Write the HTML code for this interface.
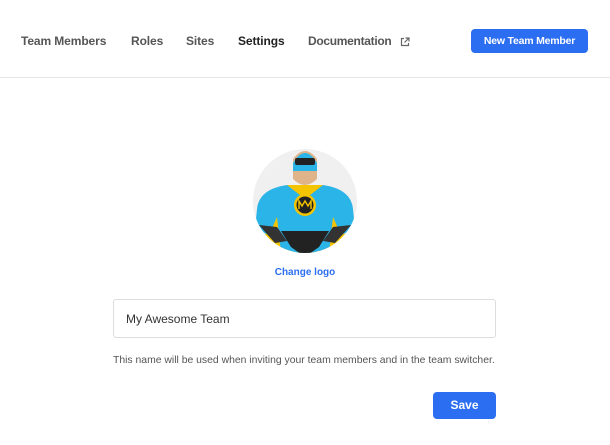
<!DOCTYPE html>
<html><head><style>
body{margin:0;width:610px;height:445px;background:#fff;font-family:"Liberation Sans",sans-serif;position:relative;overflow:hidden}
.nav{position:absolute;top:34px;font-size:12px;font-weight:bold;color:#555;letter-spacing:-0.1px}
.btn{position:absolute;background:#2b6ef2;color:#fff;font-weight:bold;border-radius:4px;text-align:center}
</style></head><body>
<div class="nav" style="left:21px">Team Members</div>
<div class="nav" style="left:131px">Roles</div>
<div class="nav" style="left:186px">Sites</div>
<div class="nav" style="left:238px;color:#222">Settings</div>
<div class="nav" style="left:308px;letter-spacing:-0.3px">Documentation</div>
<svg style="position:absolute;left:400px;top:37px" width="10" height="10" viewBox="0 0 10 10" fill="none" stroke="#666" stroke-width="1.2"><path d="M4 1.5H1.5v7h7V6M5.5 1h3.5v3.5M9 1L4.5 5.5"/></svg>
<div class="btn" style="left:471px;top:29px;width:117px;height:24px;line-height:24px;font-size:10.5px;letter-spacing:-0.2px">New Team Member</div>
<div style="position:absolute;left:0;top:77px;width:610px;height:1px;background:#e6e6e6"></div>
<svg style="position:absolute;left:253px;top:149px" width="104" height="104" viewBox="0 0 104 104">
<defs><clipPath id="c"><circle cx="52" cy="52" r="52"/></clipPath></defs>
<circle cx="52" cy="52" r="52" fill="#f0f0f0"/>
<g clip-path="url(#c)">
<path d="M22 40 L82 40 L96 104 L8 104Z" fill="#f5c400"/>
<path d="M4 60 Q6 40 34 36 L70 36 Q98 40 100 60 L102 80 L88 86 L80 68 L76 104 L28 104 L24 68 L16 86 L2 80Z" fill="#2bb4e8"/>
<path d="M34 36 L52 50 L70 36" fill="#f5c400"/>
<path d="M28 82 L76 82 L66 98 L52 108 L38 98Z" fill="#222"/>
<path d="M6 76 L24 78 L34 92 L22 94Z M98 76 L80 78 L70 92 L82 94Z" fill="#333"/>
<circle cx="52" cy="56" r="11" fill="#f5c400"/><circle cx="52" cy="56" r="8.5" fill="#222"/>
<path d="M46 60V52l3 5 3-5 3 5 3-5v8" stroke="#f5c400" fill="none" stroke-width="1.4"/>
<path d="M40 10 Q52 -6 64 10 L64 30 Q52 42 40 30Z" fill="#e0b48a"/>
<path d="M40 14 Q52 -6 64 14 L64 22 L40 22Z" fill="#2bb4e8"/>
<rect x="42" y="9" width="20" height="7" rx="2" fill="#222"/>
</g></svg>
<div style="position:absolute;left:0;width:610px;top:267px;text-align:center;font-size:10px;font-weight:bold;color:#2b6ef2">Change logo</div>
<div style="position:absolute;left:113px;top:299px;width:381px;height:37px;border:1px solid #ddd;border-radius:3px"><span style="position:absolute;left:12px;top:12px;font-size:12px;color:#333">My Awesome Team</span></div>
<div style="position:absolute;left:113px;top:355px;font-size:10.4px;color:#555">This name will be used when inviting your team members and in the team switcher.</div>
<div class="btn" style="left:433px;top:392px;width:63px;height:27px;line-height:27px;font-size:12px">Save</div>
</body></html>
